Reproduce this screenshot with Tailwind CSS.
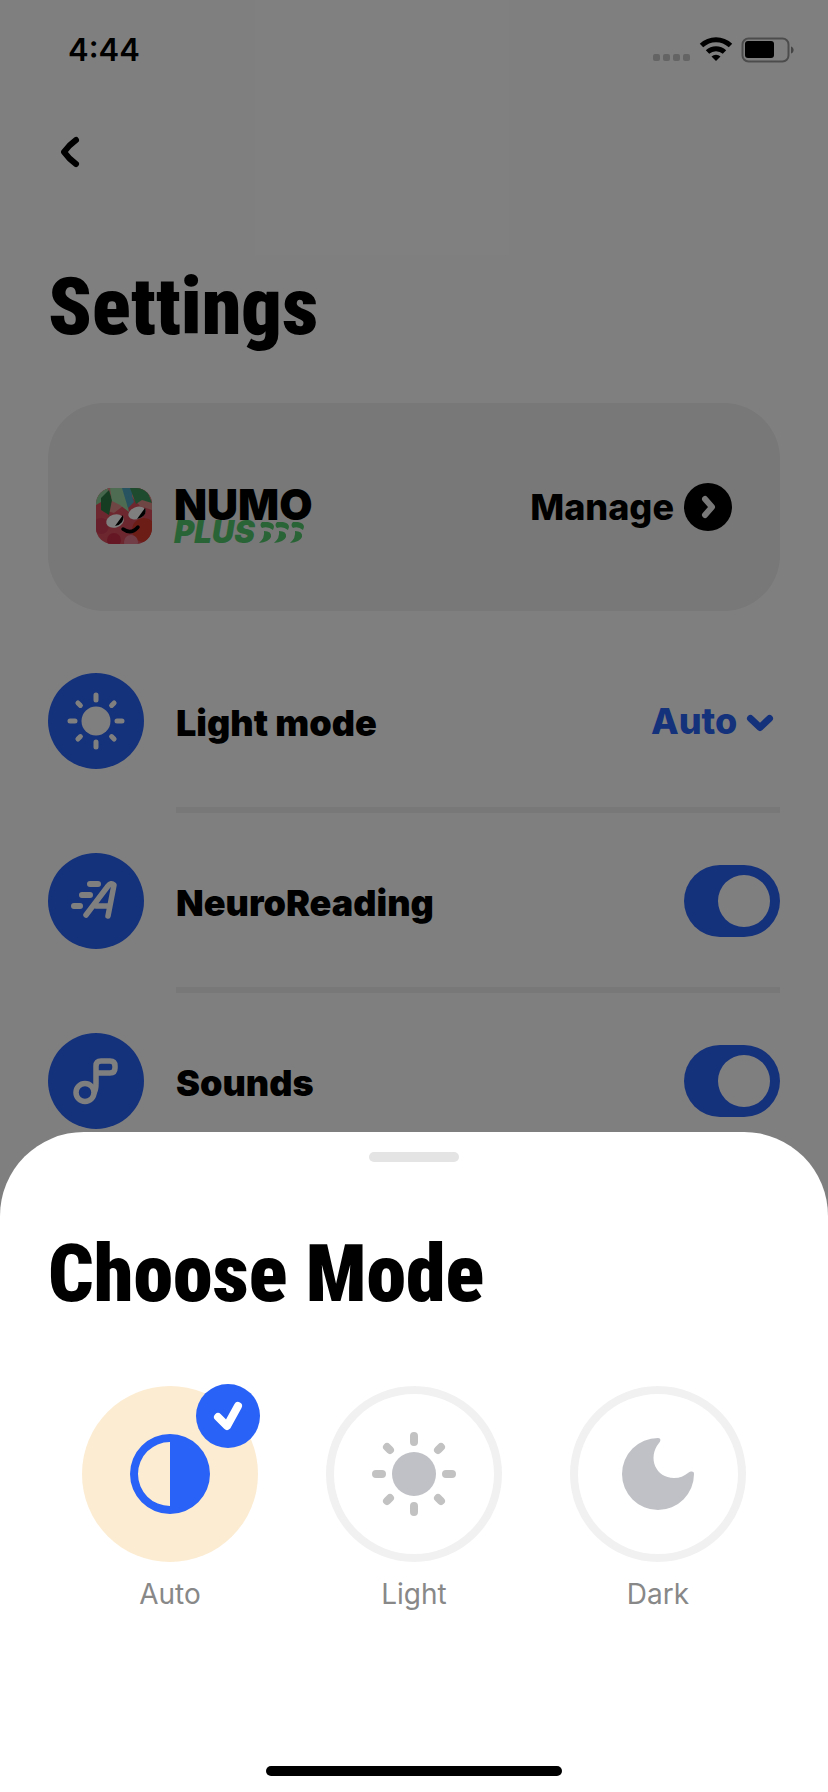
<!DOCTYPE html>
<html lang="en">
<head>
    <meta charset="UTF-8">
    <meta name="viewport" content="width=device-width, initial-scale=1">
    <title>Settings</title>
    <script src="https://cdn.jsdelivr.net/npm/@tailwindcss/browser@4"></script>
</head>
<body class="bg-white text-black font-['Inter',sans-serif]">
<div class="relative h-screen overflow-hidden">

    <!-- Settings page -->
    <header class="flex items-center justify-between h-25 pl-17 pr-8">
        <span class="text-[31px] leading-10 font-semibold">4:44</span>
        <svg class="w-36 h-8" viewBox="0 0 144 32" aria-hidden="true">
            <g fill="#c8c8c8">
                <rect x="1" y="20" width="7" height="7" rx="2"/>
                <rect x="11" y="20" width="7" height="7" rx="2"/>
                <rect x="21" y="20" width="7" height="7" rx="2"/>
                <rect x="31" y="20" width="7" height="7" rx="2"/>
            </g>
            <g fill="none" stroke="#000" stroke-width="5">
                <path d="M49.500 11.500a21 21 0 0 1 29 0"/>
                <path d="M55.500 18a12.500 12.500 0 0 1 17 0"/>
            </g>
            <path d="M59.500 22.500a6.500 6.500 0 0 1 9 0L64 27z"/>
            <rect x="90.500" y="4.500" width="46" height="23" rx="6" fill="none" stroke="#999" stroke-width="2"/>
            <rect x="93" y="7" width="29" height="17" rx="3"/>
            <path d="M139 12.500c3.500 1 3.500 6 0 7z" fill="#888"/>
        </svg>
    </header>

    <main class="px-12">
        <button type="button" aria-label="Back" class="flex items-center justify-center size-11 mt-[30px]">
            <svg class="w-5 h-8" viewBox="0 0 20 32" fill="none" stroke="#000" stroke-width="6" stroke-linecap="round" stroke-linejoin="round">
                <path d="M16 4Q9 9 4 16Q9 23 16 28"/>
            </svg>
        </button>

        <h1 class="mt-[85px] text-[80px] leading-24 font-black font-['Roboto_Condensed','Roboto',sans-serif]">Settings</h1>

        <section class="flex items-center justify-between mt-12 px-12 py-[67px] rounded-[56px] bg-[#f0f0f0]">
            <div class="flex items-center gap-[22px] mt-[18px]">
                <svg class="size-14" viewBox="0 0 56 56" aria-hidden="true">
                    <defs><clipPath id="app"><rect width="56" height="56" rx="16"/></clipPath></defs>
                    <g clip-path="url(#app)">
                        <rect width="56" height="56" fill="#d94f5f"/>
                        <path d="M0 0h56v22l-12-4-8-9-9 9-9 7-10-3z" fill="#e08c88"/>
                        <circle cx="48" cy="42" r="12" fill="#d83a2c"/>
                        <circle cx="5" cy="38" r="8" fill="#cf3f56"/>
                        <circle cx="18" cy="52" r="7" fill="#cc2f48"/>
                        <circle cx="35" cy="54" r="7" fill="#e27d90"/>
                        <path d="M0 0h12l-1 9-6 5-5 3z" fill="#8fcf9a"/>
                        <path d="M5 10l8-8 3 10-3 15-8-5z" fill="#2d7a45"/>
                        <path d="M14 0h14l5 24-9-7-8-4z" fill="#9bd8a4"/>
                        <path d="M26 0h12l-2 8 2 6-6 6z" fill="#4fa6c0"/>
                        <path d="M34 0h16l6 15-10-3-6 4z" fill="#3c965a"/>
                        <ellipse cx="19" cy="33" rx="9" ry="6.500" fill="#fff" transform="rotate(-18 19 33)"/>
                        <path d="M19 38l8-11q2 9-8 11z"/>
                        <ellipse cx="41" cy="25" rx="9" ry="6" fill="#fff" transform="rotate(-22 41 25)"/>
                        <path d="M41 31l8-11q3 8-8 11z"/>
                        <path d="M27 41q8 6 15-2" fill="none" stroke="#000" stroke-width="3.500" stroke-linecap="round"/>
                    </g>
                </svg>
                <div>
                    <div class="text-[43px] leading-8 font-black">NUMO</div>
                    <div class="flex items-center gap-1 text-[#52c86c]">
                        <span class="text-[31px] leading-6 font-black italic">PLUS</span>
                        <!-- speed streaks after the word -->
                        <svg class="w-12 h-6" viewBox="0 0 48 24" fill="currentColor" aria-hidden="true">
                            <path d="M3 2h6q6 1 6 5l-1 3q-5-4-11-2-3-3 0-6zM5 11q8 0 7 6-2 5-12 6 6-5 5-12z"/>
                            <path d="M18 2h6q6 1 6 5l-1 3q-5-4-11-2-3-3 0-6zM20 11q8 0 7 6-2 5-12 6 6-5 5-12z"/>
                            <path d="M34 2h5q6 1 6 5l-1 3q-5-4-10-2-3-3 0-6zM36 11q8 0 7 6-2 5-12 6 6-5 5-12z"/>
                        </svg>
                    </div>
                </div>
            </div>
            <button type="button" class="flex items-center gap-[10px] text-[36px] leading-12 font-extrabold">
                Manage
                <svg class="size-12" viewBox="0 0 48 48" aria-hidden="true">
                    <circle cx="24" cy="24" r="24"/>
                    <path d="M21 16l7 8-7 8" fill="none" stroke="#f0f0f0" stroke-width="6" stroke-linecap="round" stroke-linejoin="round"/>
                </svg>
            </button>
        </section>

        <ul class="mt-[62px]">
            <li>
                <div class="flex items-center gap-8">
                    <svg class="size-24" viewBox="0 0 96 96" aria-hidden="true">
                        <circle cx="48" cy="48" r="48" fill="#2962f6"/>
                        <circle cx="48" cy="48" r="14.500" fill="#fff"/>
                        <path d="M48 22v5M48 69v5M22 48h5M69 48h5M29.900 29.900l2.500 2.500M63.600 63.600l2.500 2.500M29.900 66.100l2.500-2.500M63.600 32.400l2.500-2.500" stroke="#fff" stroke-width="5" stroke-linecap="round"/>
                    </svg>
                    <label for="mode" class="flex-1 pt-1 text-[36px] leading-12 font-black">Light mode</label>
                    <div class="relative flex items-center text-[#2962f6]">
                        <select id="mode" class="appearance-none pr-[42px] text-[36px] leading-12 font-extrabold outline-none">
                            <option>Auto</option>
                        </select>
                        <svg class="absolute right-1.5 top-4 w-7 h-5 pointer-events-none" viewBox="0 0 28 20" fill="none" stroke="currentColor" stroke-width="7" stroke-linecap="round" stroke-linejoin="round" aria-hidden="true">
                            <path d="M4.500 5.500l9.500 9 9.500-9"/>
                        </svg>
                    </div>
                </div>
                <hr class="mt-[38px] mb-10 ml-32 border-0 h-1.5 bg-[#f0f0f0]">
            </li>
            <li>
                <div class="flex items-center gap-8">
                    <svg class="size-24" viewBox="0 0 96 96" aria-hidden="true">
                        <circle cx="48" cy="48" r="48" fill="#2962f6"/>
                        <g fill="none" stroke="#fff" stroke-linecap="round" stroke-linejoin="round">
                            <path d="M42 31h8M34 42h8M26 53h6" stroke-width="6"/>
                            <path d="M38 62l22-29q3-4 6-1l-6 31M48 53h12" stroke-width="5.500"/>
                        </g>
                    </svg>
                    <label for="neuro" class="flex-1 pt-1 text-[36px] leading-12 font-black">NeuroReading</label>
                    <input id="neuro" type="checkbox" role="switch" checked class="appearance-none flex items-center justify-start checked:justify-end w-24 h-18 px-2.5 rounded-full bg-[#2962f6] before:size-13 before:rounded-full before:bg-white">
                </div>
                <hr class="mt-[38px] mb-10 ml-32 border-0 h-1.5 bg-[#f0f0f0]">
            </li>
            <li>
                <div class="flex items-center gap-8">
                    <svg class="size-24" viewBox="0 0 96 96" aria-hidden="true">
                        <circle cx="48" cy="48" r="48" fill="#2962f6"/>
                        <g fill="none" stroke="#fff" stroke-width="5.500">
                            <circle cx="37" cy="59.500" r="9"/>
                            <path d="M46 60q2-3 2-10V33q0-5 5-5h9q5 0 5 5v2q0 5-5 5H49" stroke-linejoin="round"/>
                        </g>
                    </svg>
                    <label for="sounds" class="flex-1 pt-1 text-[36px] leading-12 font-black">Sounds</label>
                    <input id="sounds" type="checkbox" role="switch" checked class="appearance-none flex items-center justify-start checked:justify-end w-24 h-18 px-2.5 rounded-full bg-[#2962f6] before:size-13 before:rounded-full before:bg-white">
                </div>
            </li>
        </ul>
    </main>

    <!-- Dimmed backdrop -->
    <div class="absolute inset-0 bg-black/50"></div>

    <!-- Bottom sheet -->
    <section role="dialog" aria-labelledby="sheet-title" class="absolute inset-x-0 bottom-0 px-12 pt-5 pb-4 rounded-t-[84px] bg-white">
        <div class="mx-auto w-[90px] h-2.5 rounded-full bg-[#e4e4e4]"></div>
        <h2 id="sheet-title" class="mt-16 text-[80px] leading-24 font-black font-['Roboto_Condensed','Roboto',sans-serif]">Choose Mode</h2>

        <div class="grid grid-cols-3 mt-16 text-[28px] leading-10 text-[#888888]">
            <label class="flex flex-col items-center gap-3">
                <input type="radio" name="theme" checked class="sr-only">
                <span class="relative flex items-center justify-center size-44 rounded-full bg-[#fcecd2]">
                    <svg class="size-20" viewBox="0 0 80 80" fill="#2962f6" aria-hidden="true">
                        <path fill-rule="evenodd" d="M40 0a40 40 0 1 0 0 80 40 40 0 0 0 0-80zM40 8v64a32 32 0 0 1 0-64z"/>
                    </svg>
                    <svg class="absolute -top-0.5 -right-0.5 size-16" viewBox="0 0 64 64" fill="none" aria-hidden="true">
                        <circle cx="32" cy="32" r="32" fill="#2962f6"/>
                        <path d="M22 33l9 9 11-20" stroke="#fff" stroke-width="8" stroke-linecap="round" stroke-linejoin="round"/>
                    </svg>
                </span>
                Auto
            </label>
            <label class="flex flex-col items-center gap-3">
                <input type="radio" name="theme" class="sr-only">
                <span class="flex items-center justify-center size-44 rounded-full border-8 border-[#f1f1f1]">
                    <svg class="size-21" viewBox="0 0 84 84" aria-hidden="true">
                        <circle cx="42" cy="42" r="22" fill="#bfc1c6"/>
                        <path d="M42 4v6M42 74v6M4 42h6M74 42h6M15 15l3 3M66 66l3 3M15 69l3-3M66 18l3-3" stroke="#c2c2c2" stroke-width="8" stroke-linecap="round"/>
                    </svg>
                </span>
                Light
            </label>
            <label class="flex flex-col items-center gap-3">
                <input type="radio" name="theme" class="sr-only">
                <span class="flex items-center justify-center size-44 rounded-full border-8 border-[#f1f1f1]">
                    <svg class="size-18" viewBox="0 0 72 72" fill="#bfc1c6" aria-hidden="true">
                        <path d="M36 0c3 0 3 3 1 5-12 15-3 35 15 35 6 0 10-2 14-5 3-2 6-2 6 1a36 36 0 1 1-36-36z"/>
                    </svg>
                </span>
                Dark
            </label>
        </div>

        <div class="mx-auto mt-38 w-74 h-2.5 rounded-full bg-black"></div>
    </section>
</div>
</body>
</html>
